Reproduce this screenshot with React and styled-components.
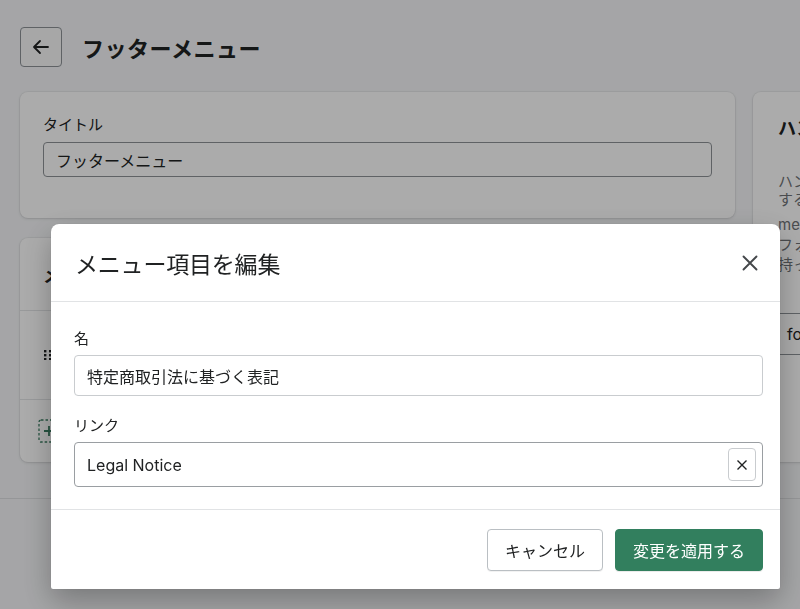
import styled, { createGlobalStyle } from "styled-components";

const GlobalStyle = createGlobalStyle`
  html, body {
    margin: 0;
    padding: 0;
    background: #f3f4f6;
    font-family: "Inter", "Noto Sans CJK JP", sans-serif;
    color: #202223;
    overflow: hidden;
  }
`;

function Home() {
  return (
    <>
      <GlobalStyle />
      <Page>
        <Header>
          <BackButton aria-label="戻る">
            <svg width="20" height="20" viewBox="0 0 20 20" fill="none">
              <path d="M17 10H3.5M9 4l-6 6 6 6" stroke="#202223" strokeWidth="1.8" strokeLinecap="round" strokeLinejoin="round" />
            </svg>
          </BackButton>
          <PageTitle>フッターメニュー</PageTitle>
        </Header>

        <Layout>
          <Column>
            <Card $pad="24px 23px 41px">
              <FieldLabel>タイトル</FieldLabel>
              <PageInput>フッターメニュー</PageInput>
            </Card>
            <Card>
              <ListRow $h="72px">
                <CardHeading>メニュー項目</CardHeading>
              </ListRow>
              <ListRow $h="88px">
                <svg width="10" height="10" viewBox="0 0 10 10">
                  {[0, 4, 8].map((y) =>
                    [0, 5].map((x) => <rect key={`${x}-${y}`} x={x + 1} y={y} width="2.4" height="2.4" fill="#202223" />)
                  )}
                </svg>
                <span>特定商取引法に基づく表記</span>
              </ListRow>
              <ListRow $h="62px" $last>
                <svg width="22" height="24" viewBox="0 0 22 24" fill="none" style={{ marginLeft: -5 }}>
                  <rect x="1" y="1" width="20" height="22" rx="2" stroke="#3b7d62" strokeWidth="1.3" strokeDasharray="2.5 2" />
                  <path d="M11 7v10M6 12h10" stroke="#3b7d62" strokeWidth="1.8" />
                </svg>
                <AddText>メニュー項目を追加</AddText>
              </ListRow>
            </Card>
          </Column>
          <Card $pad="22px 25px">
            <CardHeading>ハンドル</CardHeading>
            <SideText $top="33px" $lh="18px">
              ハンドルはテーマでこのメニューを参照
              <br />
              するために使用されます。例えば
            </SideText>
            <SideText $top="6px" $lh="20px">
              menu というハンドルの
              <br />
              フォルダはテーマの中で
              <br />
              持っています。
            </SideText>
            <SideInput>footer</SideInput>
          </Card>
        </Layout>
        <PageRule />
      </Page>

      <Overlay>
        <Modal>
          <ModalHeader>
            <ModalTitle>メニュー項目を編集</ModalTitle>
            <IconButton aria-label="閉じる">
              <svg width="16" height="16" viewBox="0 0 16 16">
                <path d="M1.5 1.5l13 13M14.5 1.5l-13 13" stroke="#44474a" strokeWidth="1.9" strokeLinecap="round" />
              </svg>
            </IconButton>
          </ModalHeader>
          <ModalBody>
            <Field>
              <Label>名</Label>
              <TextBox $h="41px">特定商取引法に基づく表記</TextBox>
            </Field>
            <Field>
              <Label>リンク</Label>
              <TextBox $h="45px" $dark>
                Legal Notice
                <ClearButton aria-label="クリア">
                  <svg width="12" height="12" viewBox="0 0 12 12">
                    <path d="M1.5 1.5l9 9M10.5 1.5l-9 9" stroke="#202223" strokeWidth="1.4" />
                  </svg>
                </ClearButton>
              </TextBox>
            </Field>
          </ModalBody>
          <ModalFooter>
            <Button>キャンセル</Button>
            <Button $primary>変更を適用する</Button>
          </ModalFooter>
        </Modal>
      </Overlay>
    </>
  );
}

const Page = styled.div`
  padding: 27px 0 0 20px;
  height: 609px;
  box-sizing: border-box;
`;

const Header = styled.div`
  display: flex;
  align-items: center;
  gap: 20px;
`;

const BackButton = styled.button`
  width: 42px;
  height: 40px;
  display: flex;
  align-items: center;
  justify-content: center;
  background: #f6f6f7;
  border: 1px solid #8c9196;
  border-radius: 4px;
  padding: 0;
`;

const PageTitle = styled.h1`
  margin: 0;
  font-size: 22px;
  font-weight: 700;
  letter-spacing: 0.5px;
`;

const Layout = styled.div`
  display: grid;
  grid-template-columns: 715px 300px;
  gap: 18px;
  margin-top: 25px;
`;

const Column = styled.div`
  display: flex;
  flex-direction: column;
  gap: 20px;
`;

const Card = styled.div`
  background: #fdfdfd;
  border-radius: 8px;
  box-shadow: 0 0 0 1px rgba(63, 63, 68, 0.05), 0 1px 3px rgba(63, 63, 68, 0.15);
  padding: ${(p) => p.$pad || "0"};
`;

const FieldLabel = styled.div`
  font-size: 15px;
  line-height: 18px;
  margin-bottom: 8px;
`;

const PageInput = styled.div`
  height: 35px;
  box-sizing: border-box;
  border: 1px solid #8c9196;
  border-radius: 4px;
  padding: 0 12px;
  display: flex;
  align-items: center;
  font-size: 16px;
`;

const CardHeading = styled.h2`
  margin: 0;
  font-size: 18px;
  font-weight: 700;
`;

const ListRow = styled.div`
  height: ${(p) => p.$h};
  display: flex;
  align-items: center;
  gap: 14px;
  padding: 0 23px;
  border-bottom: ${(p) => (p.$last ? "none" : "1px solid #e1e3e5")};
  font-size: 16px;
`;

const AddText = styled.span`
  color: #2c6ecb;
`;

const SideText = styled.p`
  margin: ${(p) => p.$top} 0 0;
  font-size: 15px;
  line-height: ${(p) => p.$lh};
  color: #6d7175;
  white-space: nowrap;
`;

const SideInput = styled.div`
  margin-top: 38px;
  height: 40px;
  border-top: 1px solid #8c9196;
  border-bottom: 1px solid #8c9196;
  padding-left: 9px;
  display: flex;
  align-items: center;
  font-size: 16px;
`;

const PageRule = styled.div`
  margin: 36px 0 0 -20px;
  border-top: 1px solid #dcdee0;
`;

const Overlay = styled.div`
  position: fixed;
  inset: 0;
  background: rgba(0, 0, 0, 0.32);
  padding: 224px 0 0 51px;
`;

const Modal = styled.div`
  width: 729px;
  background: #fff;
  border-radius: 8px 8px 2px 2px;
  box-shadow: 0 12px 30px rgba(0, 0, 0, 0.28), 0 0 1px rgba(0, 0, 0, 0.2);
`;

const ModalHeader = styled.div`
  height: 78px;
  box-sizing: border-box;
  display: flex;
  align-items: center;
  justify-content: space-between;
  padding: 0 20px 0 24px;
  border-bottom: 1px solid #e1e3e5;
`;

const ModalTitle = styled.h2`
  margin: 0;
  font-size: 23px;
  font-weight: 400;
  letter-spacing: -0.2px;
`;

const IconButton = styled.button`
  background: none;
  border: none;
  padding: 2px;
  display: flex;
`;

const ModalBody = styled.div`
  padding: 26px 17px 22px 23px;
  display: flex;
  flex-direction: column;
  gap: 19px;
  border-bottom: 1px solid #e1e3e5;
`;

const Field = styled.div`
  display: flex;
  flex-direction: column;
  gap: 6px;
`;

const Label = styled.label`
  font-size: 15px;
  line-height: 21px;
`;

const TextBox = styled.div`
  height: ${(p) => p.$h};
  box-sizing: border-box;
  border: 1px solid ${(p) => (p.$dark ? "#9a9ea2" : "#c9cccf")};
  border-radius: 4px;
  padding: 0 6px 0 12px;
  display: flex;
  align-items: center;
  justify-content: space-between;
  font-size: 16px;
`;

const ClearButton = styled.button`
  width: 28px;
  height: 33px;
  box-sizing: border-box;
  background: #fff;
  border: 1px solid #c9cccf;
  border-radius: 4px;
  display: flex;
  align-items: center;
  justify-content: center;
  padding: 0;
`;

const ModalFooter = styled.div`
  display: flex;
  justify-content: flex-end;
  gap: 12px;
  padding: 19px 17px 18px 23px;
`;

const Button = styled.button`
  height: 42px;
  padding: 0 17px;
  border-radius: 4px;
  font-family: inherit;
  font-size: 16px;
  border: 1px solid ${(p) => (p.$primary ? "#327f5e" : "#babfc3")};
  background: ${(p) => (p.$primary ? "#327f5e" : "#fff")};
  color: ${(p) => (p.$primary ? "#fff" : "#202223")};
  box-shadow: ${(p) => (p.$primary ? "0 1px 0 rgba(0,0,0,0.08)" : "0 1px 0 rgba(0,0,0,0.05)")};
`;

export default Home;
